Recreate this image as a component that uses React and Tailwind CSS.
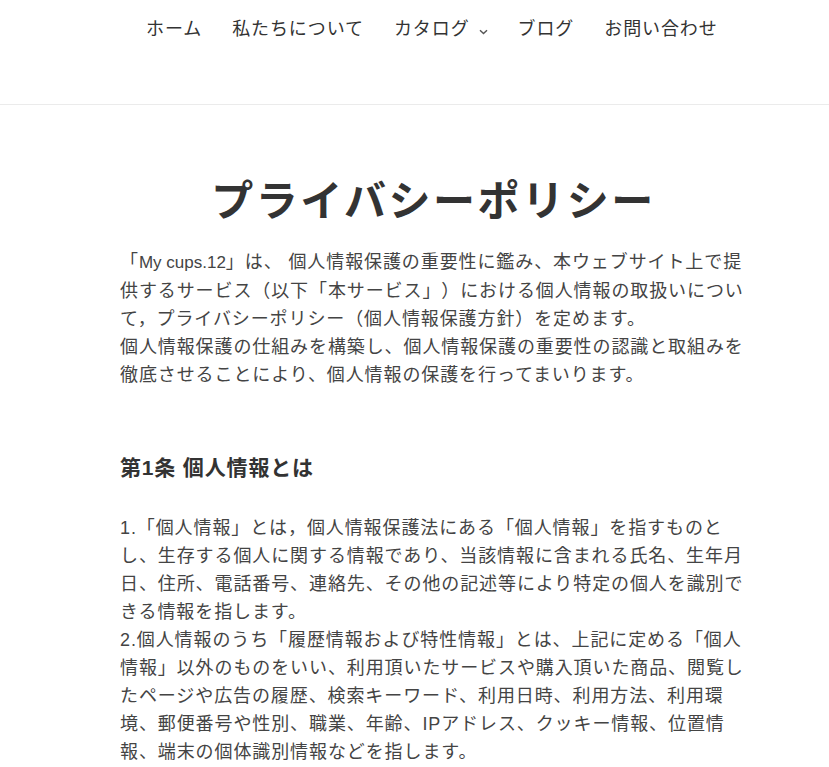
import React from 'react';

const navItems = ['ホーム', '私たちについて', 'カタログ', 'ブログ', 'お問い合わせ'];

export default function App() {
  return (
    <div
      className="min-h-screen bg-white text-[#444] [text-spacing-trim:space-all]"
      style={{ fontFamily: '"Liberation Sans", "Noto Sans CJK JP", sans-serif' }}
    >
      {/* Header */}
      <header className="h-[105px] border-b border-[#ebebeb]">
        <nav className="flex items-center pl-[146px] pt-[16px] text-[18px] leading-[26px] tracking-[0.05em] text-[#333]">
          {navItems.map((item, i) => (
            <div key={item} className={`flex items-center ${i > 0 ? 'ml-[30px]' : ''}`}>
              <span>{item}</span>
              {item === 'カタログ' && (
                <svg className="ml-[9px] mt-[6px]" width="9" height="6" viewBox="0 0 9 6" fill="none">
                  <path d="M1 1.2 L4.5 4.6 L8 1.2" stroke="#555" strokeWidth="1.4" />
                </svg>
              )}
            </div>
          ))}
        </nav>
      </header>

      {/* Content */}
      <main className="pl-[120px] pt-[72px]">
        <div className="w-[627px]">
          <h1 className="text-center text-[42px] leading-[50px] font-bold tracking-[0.06em] text-[#333]">
            プライバシーポリシー
          </h1>

          <p className="mt-[21px] text-[18px] leading-[28px] tracking-[0.05em]">
            「<span className="text-[17px] tracking-normal">My cups.12</span>」は、 個人情報保護の重要性に鑑み、本ウェブサイト上で提供するサービス（以下「本サービス」）における個人情報の取扱いについて，プライバシーポリシー（個人情報保護方針）を定めます。
            <br />
            個人情報保護の仕組みを構築し、個人情報保護の重要性の認識と取組みを徹底させることにより、個人情報の保護を行ってまいります。
          </p>

          <h2 className="mt-[65px] text-[21px] leading-[28px] font-bold tracking-[0.04em] text-[#333]">
            第1条 個人情報とは
          </h2>

          <p className="mt-[32px] text-[18px] leading-[28px] tracking-[0.05em]">
            1.「個人情報」とは，個人情報保護法にある「個人情報」を指すものとし、生存する個人に関する情報であり、当該情報に含まれる氏名、生年月日、住所、電話番号、連絡先、その他の記述等により特定の個人を識別できる情報を指します。
            <br />
            2.個人情報のうち「履歴情報および特性情報」とは、上記に定める「個人情報」以外のものをいい、利用頂いたサービスや購入頂いた商品、閲覧したページや広告の履歴、検索キーワード、利用日時、利用方法、利用環境、郵便番号や性別、職業、年齢、IPアドレス、クッキー情報、位置情報、端末の個体識別情報などを指します。
          </p>
        </div>
      </main>
    </div>
  );
}
